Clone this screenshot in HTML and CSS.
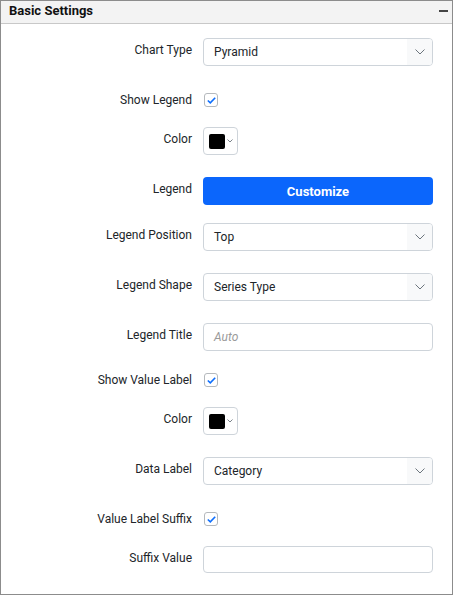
FILE: index.html
```html
<!DOCTYPE html>
<html>
<head>
<meta charset="utf-8">
<link rel="stylesheet" href="styles.css">
</head>
<body>
<div class="panel">
  <div class="header">
    <span class="title">Basic Settings</span>
    <span class="collapse"></span>
  </div>
  <div class="content">
    <div class="row r-ct">
      <label class="lbl">Chart Type</label>
      <div class="select"><span>Pyramid</span><span class="arrow"><svg width="10" height="6" viewBox="0 0 10 6"><path d="M0.5 0.5 L5 5 L9.5 0.5" fill="none" stroke="#6c757d" stroke-width="1"/></svg></span></div>
    </div>
    <div class="row check r-cb1">
      <label class="lbl">Show Legend</label>
      <span class="checkbox"><svg width="9" height="7" viewBox="0 0 9 7"><path d="M0.8 3.5 L3.3 5.8 L8.2 0.8" fill="none" stroke="#0d6efd" stroke-width="1.6"/></svg></span>
    </div>
    <div class="row r-color">
      <label class="lbl">Color</label>
      <div class="colorpick"><span class="swatch"></span><svg width="6" height="4" viewBox="0 0 6 4"><path d="M0.5 0.5 L3 3 L5.5 0.5" fill="none" stroke="#6c757d" stroke-width="0.9"/></svg></div>
    </div>
    <div class="row r-btn">
      <label class="lbl">Legend</label>
      <button class="btn">Customize</button>
    </div>
    <div class="row">
      <label class="lbl">Legend Position</label>
      <div class="select"><span>Top</span><span class="arrow"><svg width="10" height="6" viewBox="0 0 10 6"><path d="M0.5 0.5 L5 5 L9.5 0.5" fill="none" stroke="#6c757d" stroke-width="1"/></svg></span></div>
    </div>
    <div class="row">
      <label class="lbl">Legend Shape</label>
      <div class="select"><span>Series Type</span><span class="arrow"><svg width="10" height="6" viewBox="0 0 10 6"><path d="M0.5 0.5 L5 5 L9.5 0.5" fill="none" stroke="#6c757d" stroke-width="1"/></svg></span></div>
    </div>
    <div class="row">
      <label class="lbl">Legend Title</label>
      <div class="input"><span class="ph">Auto</span></div>
    </div>
    <div class="row check">
      <label class="lbl">Show Value Label</label>
      <span class="checkbox"><svg width="9" height="7" viewBox="0 0 9 7"><path d="M0.8 3.5 L3.3 5.8 L8.2 0.8" fill="none" stroke="#0d6efd" stroke-width="1.6"/></svg></span>
    </div>
    <div class="row r-color">
      <label class="lbl">Color</label>
      <div class="colorpick"><span class="swatch"></span><svg width="6" height="4" viewBox="0 0 6 4"><path d="M0.5 0.5 L3 3 L5.5 0.5" fill="none" stroke="#6c757d" stroke-width="0.9"/></svg></div>
    </div>
    <div class="row r-ct">
      <label class="lbl">Data Label</label>
      <div class="select"><span>Category</span><span class="arrow"><svg width="10" height="6" viewBox="0 0 10 6"><path d="M0.5 0.5 L5 5 L9.5 0.5" fill="none" stroke="#6c757d" stroke-width="1"/></svg></span></div>
    </div>
    <div class="row check">
      <label class="lbl">Value Label Suffix</label>
      <span class="checkbox"><svg width="9" height="7" viewBox="0 0 9 7"><path d="M0.8 3.5 L3.3 5.8 L8.2 0.8" fill="none" stroke="#0d6efd" stroke-width="1.6"/></svg></span>
    </div>
    <div class="row last">
      <label class="lbl">Suffix Value</label>
      <div class="input short"></div>
    </div>
  </div>
</div>
</body>
</html>
```

FILE: styles.css
```css
* { box-sizing: border-box; }
html, body { margin: 0; padding: 0; }
body {
  font-family: Roboto, "Noto Sans", Arial, sans-serif;
  color: #212529;
  background: #fff;
}
.panel {
  width: 453px;
  height: 595px;
  border: 1px solid #8c8c8c;
  background: #fff;
}
.header {
  height: 23px;
  background: #f3f3f3;
  border-bottom: 1px solid #c8c8c8;
  display: flex;
  align-items: center;
  justify-content: space-between;
  padding: 0 4px 4px 8px;
}
.title {
  font-size: 13px;
  font-weight: 700;
  color: #111;
}
.collapse {
  width: 9px;
  height: 2px;
  background: #444;
  margin-top: 2px;
}
.content {
  padding: 14px 19px 0 0;
}
.row {
  display: grid;
  grid-template-columns: 1fr 230px;
  column-gap: 11px;
  align-items: start;
  height: 50px;
}
.row.r-ct { height: 55px; }
.row.r-btn { height: 46px; }
.row.check { height: 34px; align-items: center; align-content: start; }
.row.check .lbl { padding-top: 0; line-height: 14px; }
.lbl {
  text-align: right;
  font-size: 12px;
  line-height: 20px;
  padding-top: 2px;
  color: #212529;
  white-space: nowrap;
}
.select, .input {
  height: 28px;
  border: 1px solid #ced4da;
  border-radius: 4px;
  display: flex;
  align-items: center;
  justify-content: space-between;
  padding-left: 10px;
  font-size: 12px;
  color: #212529;
  overflow: hidden;
}
.input.short { height: 27px; }
.arrow {
  width: 25px;
  height: 100%;
  background: #f8f9fa;
  display: flex;
  align-items: center;
  justify-content: center;
}
.ph { color: #9a9a9a; font-style: italic; }
.checkbox {
  width: 14px;
  height: 14px;
  border: 1px solid #b5b9bd;
  border-radius: 3px;
  margin-left: 1px;
  display: flex;
  align-items: center;
  justify-content: center;
  background: #fff;
}
.colorpick {
  width: 35px;
  height: 28px;
  border: 1px solid #ced4da;
  border-radius: 4px;
  display: flex;
  align-items: center;
  padding-left: 5px;
  gap: 2px;
}
.swatch {
  width: 16px;
  height: 15px;
  background: #000;
  border-radius: 2px;
}
.btn {
  height: 28px;
  width: 230px;
  border: none;
  border-radius: 4px;
  background: #0b66fc;
  color: #fff;
  font-family: Roboto, "Noto Sans", Arial, sans-serif;
  font-size: 13px;
  font-weight: 700;
  padding: 0;
}
```
